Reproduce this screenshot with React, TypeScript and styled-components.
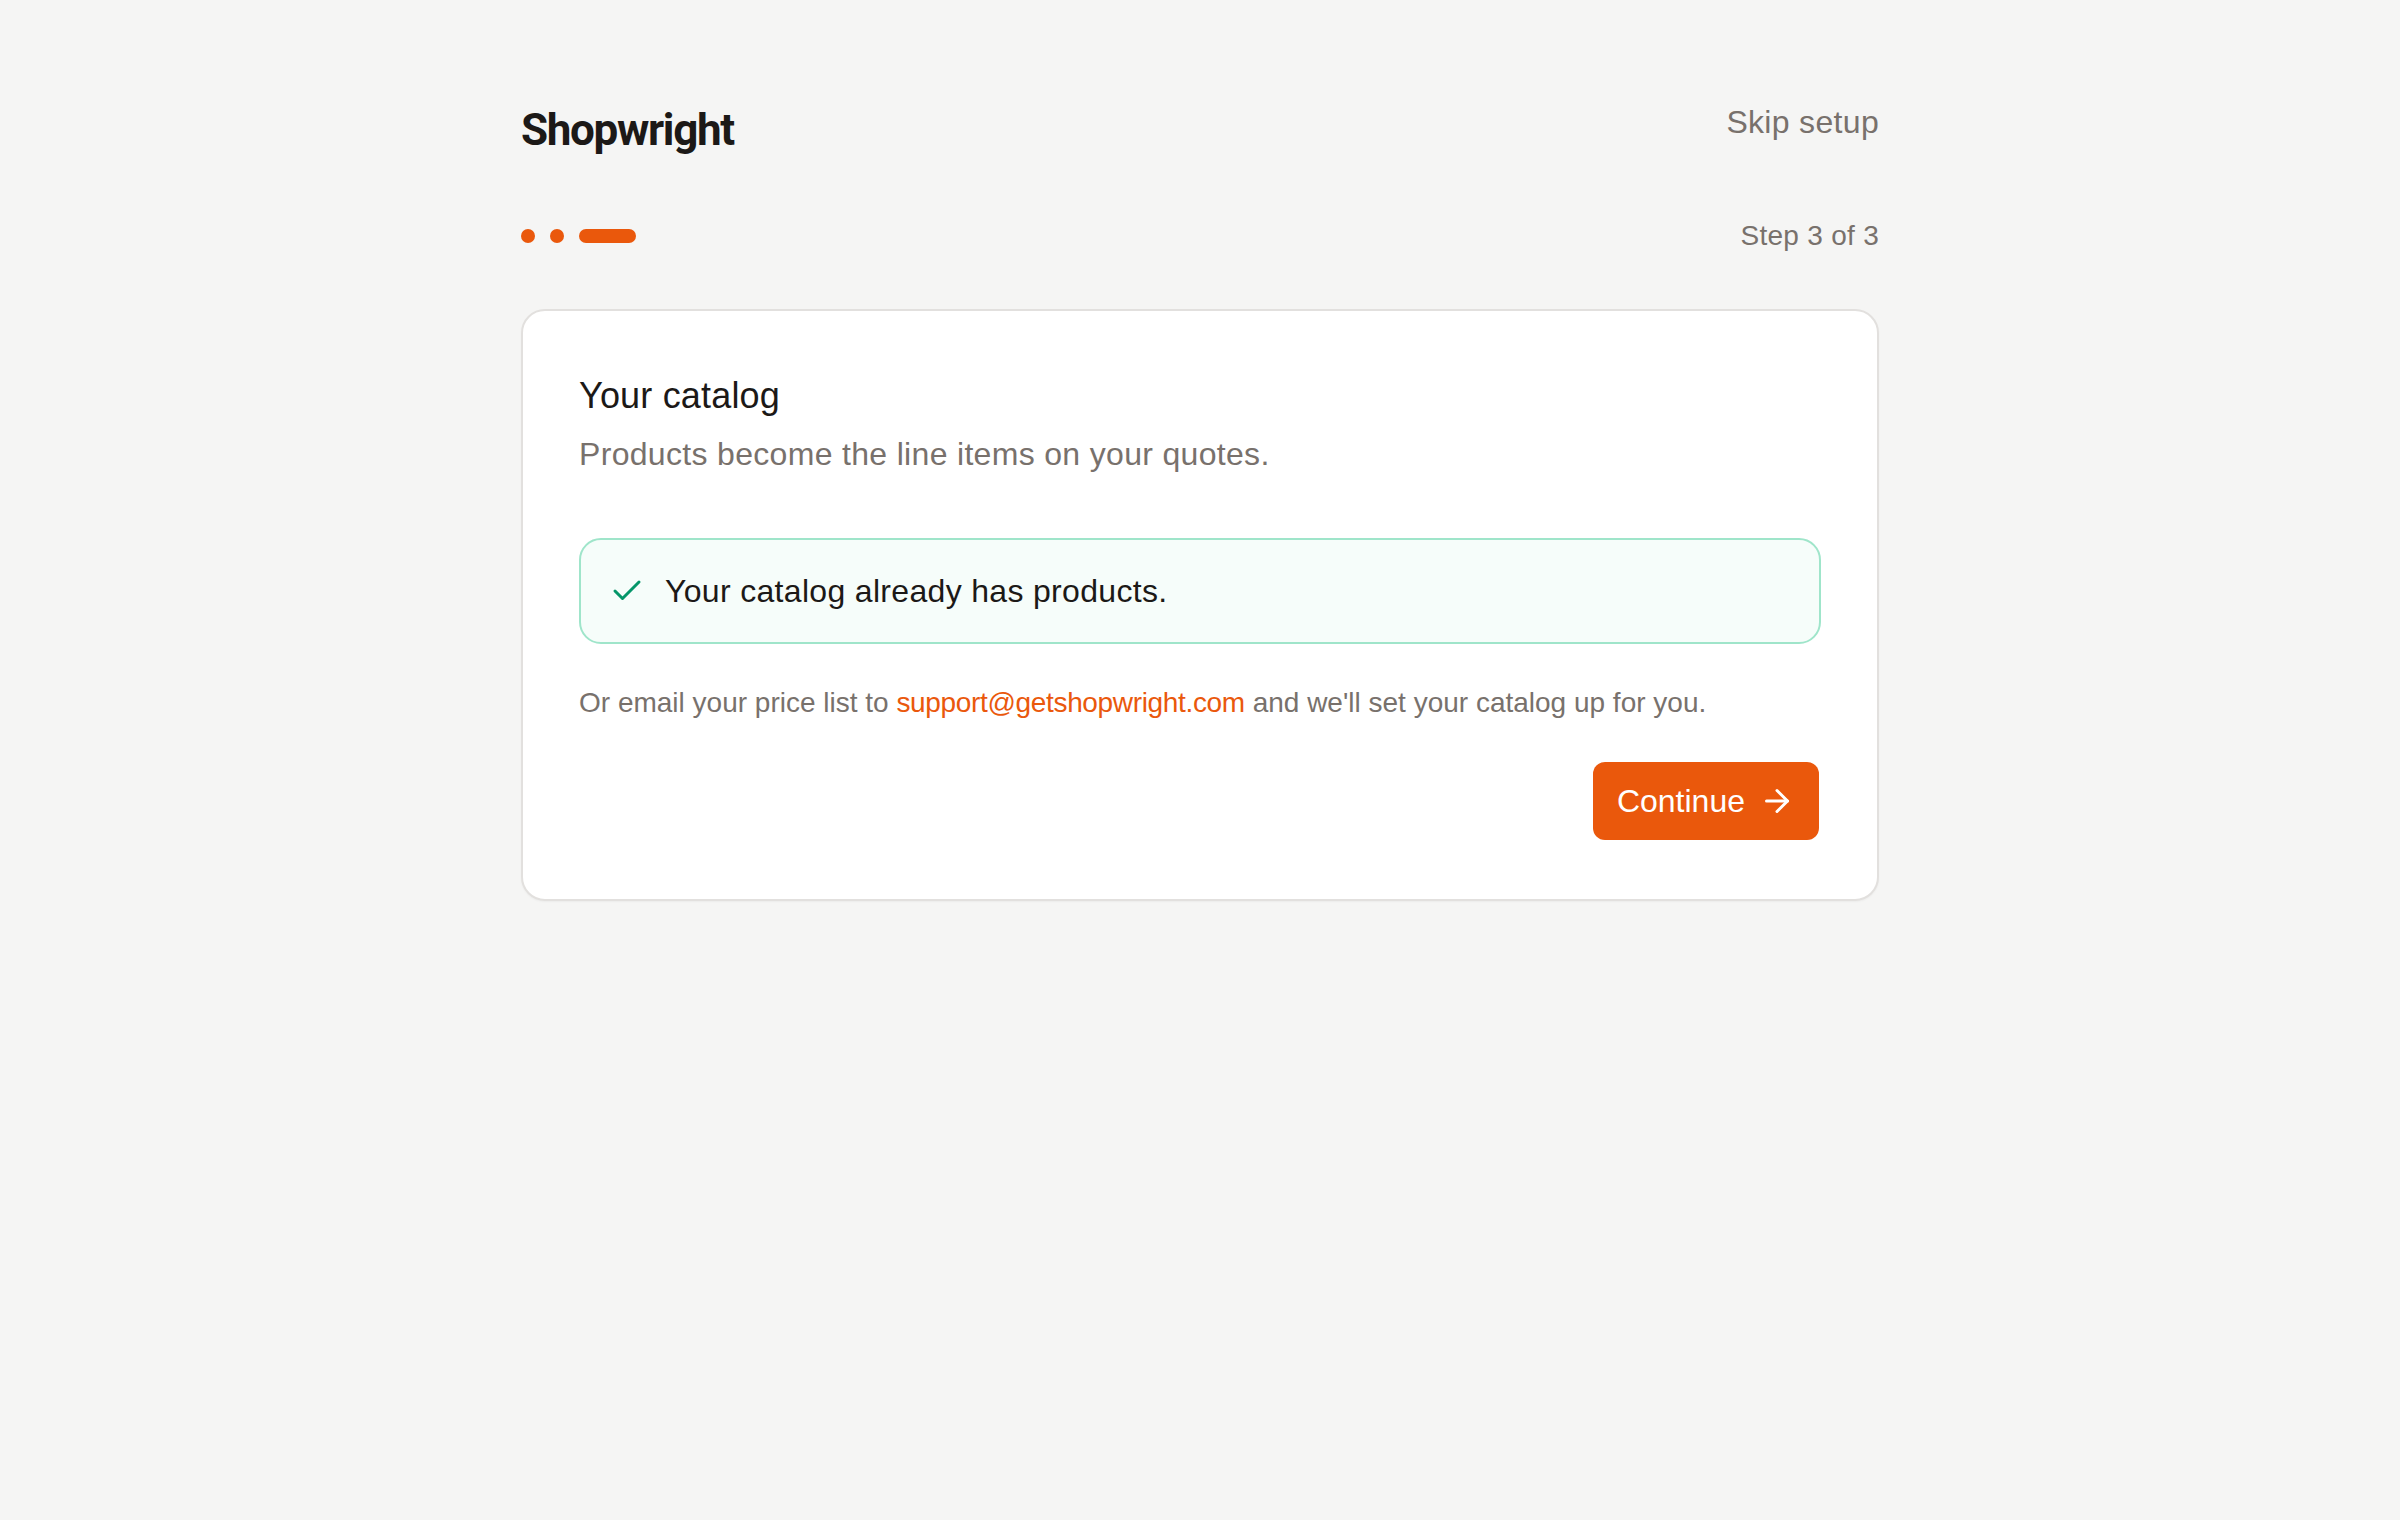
import React from "react";
import styled, { createGlobalStyle } from "styled-components";

const GlobalStyle = createGlobalStyle`
  html, body {
    margin: 0;
    padding: 0;
    background: #f5f5f4;
  }
  body {
    font-family: "Liberation Sans", Arial, sans-serif;
    color: #1c1917;
  }
  * { box-sizing: border-box; }
`;

const Page = styled.div`
  min-height: 1520px;
  padding-top: 104px;
  background: #f5f5f4;
`;

const Container = styled.div`
  width: 1358px;
  margin: 0 auto;
`;

const Header = styled.header`
  display: flex;
  justify-content: space-between;
  align-items: flex-start;
  margin-bottom: 62px;
`;

const Brand = styled.div`
  font-family: Roboto, "Liberation Sans", sans-serif;
  font-weight: 700;
  font-size: 44px;
  line-height: 1.2;
  letter-spacing: -0.03em;
  color: #1c1917;
`;

const SkipLink = styled.a`
  font-size: 32px;
  line-height: 1.2;
  letter-spacing: 0.01em;
  color: #78716c;
  text-decoration: none;
  cursor: pointer;
  margin-top: -1px;
`;

const Progress = styled.div`
  display: flex;
  justify-content: space-between;
  align-items: center;
  margin-bottom: 57px;
`;

const Dots = styled.div`
  display: flex;
  align-items: center;
  gap: 15px;
`;

const Dot = styled.span<{ $active?: boolean }>`
  display: block;
  height: 14px;
  width: ${(p) => (p.$active ? "57px" : "14px")};
  border-radius: 7px;
  background: #ea580c;
`;

const StepLabel = styled.div`
  font-size: 28px;
  line-height: 1.2;
  letter-spacing: 0.01em;
  color: #78716c;
`;

const Card = styled.section`
  background: #ffffff;
  border: 2px solid #e2e0de;
  border-radius: 24px;
  padding: 56px 56px 59px;
  box-shadow: 0 1px 2px rgba(0, 0, 0, 0.04);
`;

const Title = styled.h1`
  margin: 2px 0 7px;
  font-size: 36px;
  line-height: 1.5;
  font-weight: 400;
  letter-spacing: 0.005em;
  color: #1c1917;
`;

const Subtitle = styled.p`
  margin: 0 0 60px;
  font-size: 32px;
  line-height: 1.5;
  letter-spacing: 0.01em;
  color: #78716c;
`;

const SuccessBox = styled.div`
  display: flex;
  align-items: center;
  gap: 20px;
  padding: 27px 28px;
  border: 2px solid #9fe5ca;
  border-radius: 22px;
  background: #f6fdfa;
  font-size: 32px;
  line-height: 1.5;
  letter-spacing: 0.01em;
  color: #1c1917;
`;

const CheckIcon = styled.svg`
  flex: none;
  width: 36px;
  height: 36px;
  color: #059669;
`;

const Note = styled.p`
  margin: 38px 0 0;
  font-size: 28px;
  line-height: 1.5;
  color: #78716c;
`;

const EmailLink = styled.a`
  color: #ea580c;
  letter-spacing: -0.012em;
  text-decoration: none;
`;

const Actions = styled.div`
  display: flex;
  justify-content: flex-end;
  margin-top: 38px;
`;

const PrimaryButton = styled.button`
  display: inline-flex;
  align-items: center;
  gap: 14px;
  height: 78px;
  padding: 0 24px;
  border: none;
  border-radius: 12px;
  background: #ea580c;
  color: #ffffff;
  font-family: "Liberation Sans", Arial, sans-serif;
  font-size: 32px;
  line-height: 1;
  cursor: pointer;
  margin-right: 2px;
`;

const ArrowIcon = styled.svg`
  width: 36px;
  height: 36px;
  flex: none;
`;

export default function App() {
  return (
    <Page>
      <GlobalStyle />
      <Container>
        <Header>
          <Brand>Shopwright</Brand>
          <SkipLink>Skip setup</SkipLink>
        </Header>
        <Progress>
          <Dots>
            <Dot />
            <Dot />
            <Dot $active />
          </Dots>
          <StepLabel>Step 3 of 3</StepLabel>
        </Progress>
        <Card>
          <Title>Your catalog</Title>
          <Subtitle>Products become the line items on your quotes.</Subtitle>
          <SuccessBox>
            <CheckIcon
              viewBox="0 0 24 24"
              fill="none"
              stroke="currentColor"
              strokeWidth={2}
              strokeLinecap="round"
              strokeLinejoin="round"
            >
              <path d="M20 6 9 17l-5-5" />
            </CheckIcon>
            <span>Your catalog already has products.</span>
          </SuccessBox>
          <Note>
            Or email your price list to{" "}
            <EmailLink href="mailto:support@getshopwright.com">
              support@getshopwright.com
            </EmailLink>{" "}
            and we'll set your catalog up for you.
          </Note>
          <Actions>
            <PrimaryButton>
              Continue
              <ArrowIcon
                viewBox="0 0 24 24"
                fill="none"
                stroke="currentColor"
                strokeWidth={2}
                strokeLinecap="round"
                strokeLinejoin="round"
              >
                <path d="M5 12h14" />
                <path d="m12 5 7 7-7 7" />
              </ArrowIcon>
            </PrimaryButton>
          </Actions>
        </Card>
      </Container>
    </Page>
  );
}
